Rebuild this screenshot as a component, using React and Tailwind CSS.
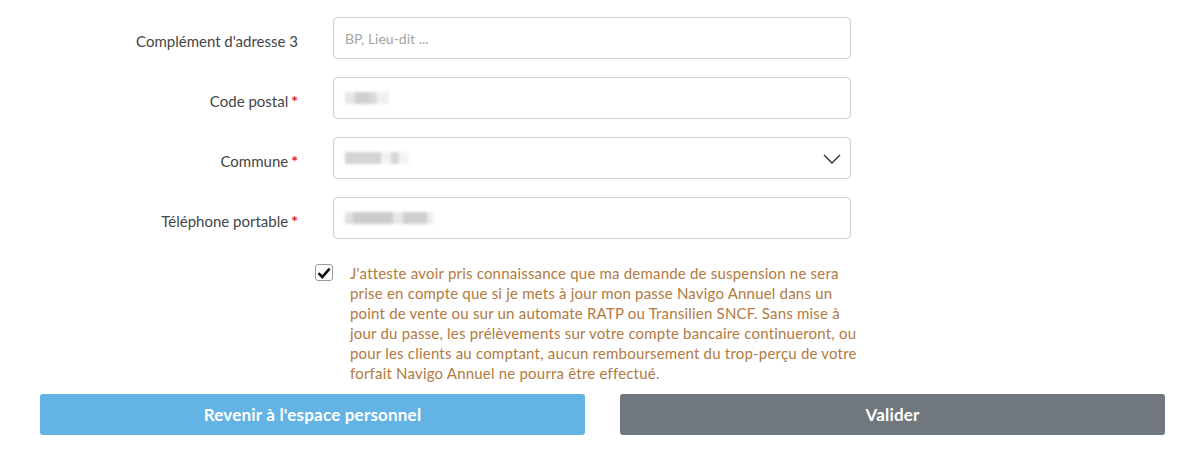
import React from "react";

const font = { fontFamily: "Lato, 'Open Sans', sans-serif" };

function Label({ children, required }) {
  return (
    <div className="flex items-center justify-end pt-[6px] text-[15px] text-[#454545]">
      <span>{children}</span>
      {required && <span className="ml-[3px] text-[16px] font-bold text-[#d01c2a]">*</span>}
    </div>
  );
}

function Blur({ w, shades }) {
  return (
    <div className="flex h-[14px] items-center blur-[1.5px]" style={{ width: w }}>
      {shades.map((s, i) => (
        <div key={i} className="h-[12px]" style={{ width: s[0], background: s[1] }} />
      ))}
    </div>
  );
}

function Field({ children, select }) {
  return (
    <div className="relative flex h-[42px] items-center rounded-[4px] border border-[#cfcfcf] bg-white px-[11px]">
      {children}
      {select && (
        <svg className="absolute right-[9px] top-[16px]" width="18" height="10" viewBox="0 0 18 10" fill="none">
          <path d="M1 1l8 8 8-8" stroke="#333" strokeWidth="1.4" />
        </svg>
      )}
    </div>
  );
}

const lines = [
  "J'atteste avoir pris connaissance que ma demande de suspension ne sera",
  "prise en compte que si je mets \u00e0 jour mon passe Navigo Annuel dans un",
  "point de vente ou sur un automate RATP ou Transilien SNCF. Sans mise \u00e0",
  "jour du passe, les pr\u00e9l\u00e8vements sur votre compte bancaire continueront, ou",
  "pour les clients au comptant, aucun remboursement du trop-per\u00e7u de votre",
  "forfait Navigo Annuel ne pourra \u00eatre effectu\u00e9.",
];

export default function App() {
  return (
    <div className="min-h-[465px] w-[1189px] bg-white" style={font}>
      <div className="grid grid-cols-[298px_518px] gap-x-[35px] gap-y-[18px] pt-[17px]">
        <Label>Complément d'adresse 3</Label>
        <Field>
          <span className="text-[14px] text-[#a3a3a3]">BP, Lieu-dit ...</span>
        </Field>
        <Label required>Code postal</Label>
        <Field>
          <Blur w={44} shades={[[10, "#e6e6e6"], [14, "#cfcfcf"], [8, "#d9d9d9"], [12, "#f0f0f0"]]} />
        </Field>
        <Label required>Commune</Label>
        <Field select>
          <Blur w={64} shades={[[36, "#d4d4d4"], [10, "#f2f2f2"], [8, "#d6d6d6"], [10, "#f5f5f5"]]} />
        </Field>
        <Label required>Téléphone portable</Label>
        <Field>
          <Blur w={88} shades={[[8, "#e0e0e0"], [40, "#cccccc"], [10, "#e8e8e8"], [24, "#cfcfcf"], [6, "#ececec"]]} />
        </Field>
      </div>

      <div className="mt-[24px] flex pl-[315px]">
        <div className="mt-[1px] flex h-[17px] w-[18px] items-center justify-center rounded-[3px] border border-[#9a9a9a] bg-white">
          <svg width="14" height="12" viewBox="0 0 14 12" fill="none">
            <path d="M1.5 6.2l3.8 3.8L12.6 1.6" stroke="#111" strokeWidth="2.6" />
          </svg>
        </div>
        <div className="ml-[17px] w-[505px] text-[15px] leading-[20px] tracking-[0.2px] text-[#b27a3e]">
          {lines.map((l, i) => (
            <div key={i} className="whitespace-nowrap">
              {l}
            </div>
          ))}
        </div>
      </div>

      <div className="mt-[11px] flex gap-[35px] pl-[40px] pr-[24px]">
        <button className="flex h-[41px] flex-1 items-center justify-center rounded-[3px] bg-[#63b3e4] text-[17px] font-bold tracking-[0.2px] text-white">
          Revenir à l'espace personnel
        </button>
        <button className="flex h-[41px] flex-1 items-center justify-center rounded-[3px] bg-[#70777e] text-[17px] font-bold tracking-[0.2px] text-white">
          Valider
        </button>
      </div>
    </div>
  );
}
